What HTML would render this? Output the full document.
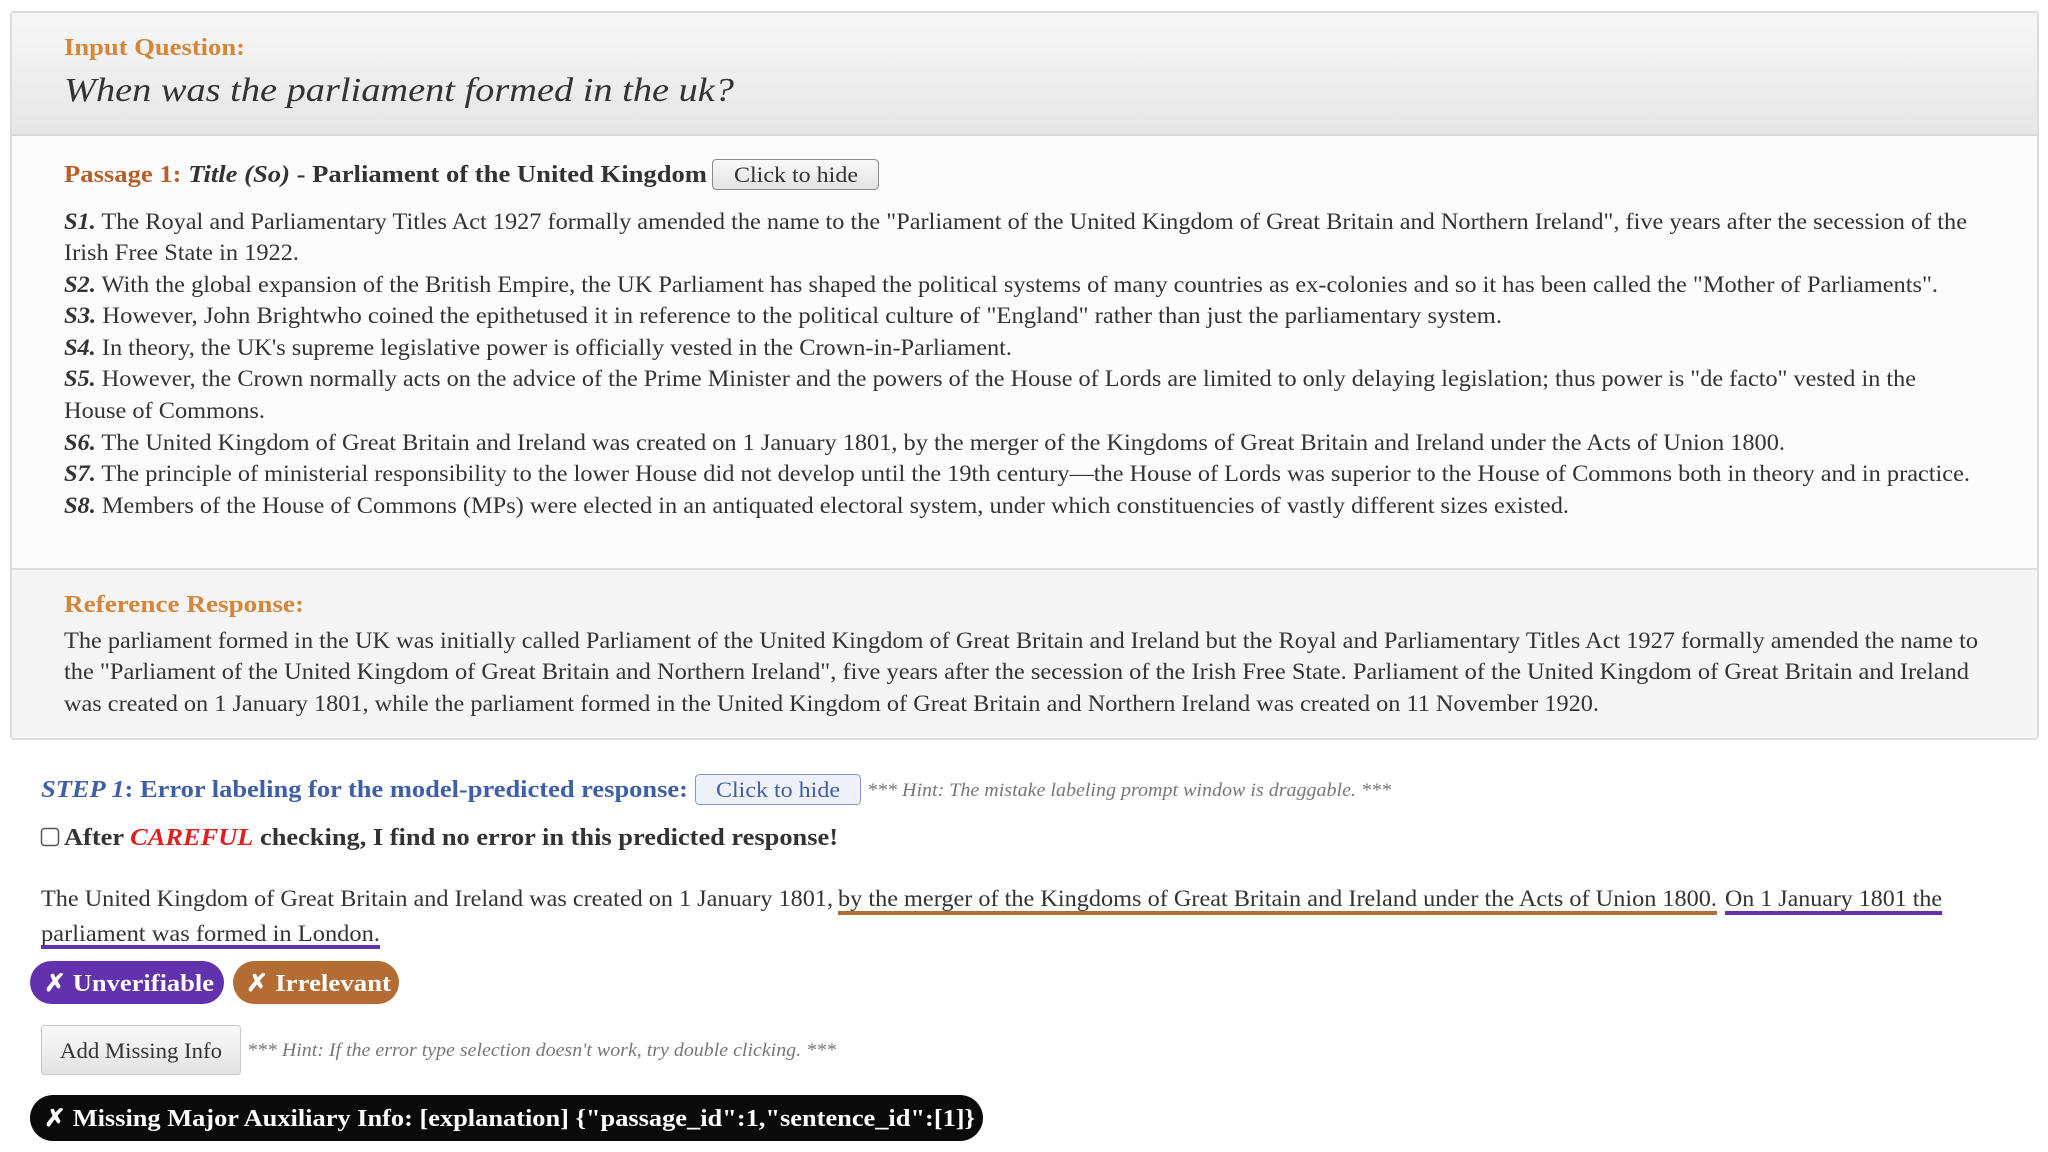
<!DOCTYPE html>
<html><head><meta charset="utf-8"><style>
html,body{margin:0;padding:0;background:#fff;width:2048px;height:1152px;overflow:hidden}
svg{display:block}
text{font-family:"Liberation Serif",serif;fill:#333}
.b{font-size:23px}
.lab{font-size:24px;font-weight:bold;fill:#d4863a}
.sb{font-weight:bold;font-style:italic}
.h{font-size:19px;font-style:italic;fill:#777}
</style></head><body>
<svg width="2048" height="1152" viewBox="0 0 2048 1152" xmlns="http://www.w3.org/2000/svg">
<defs>
<linearGradient id="g1" x1="0" y1="0" x2="0" y2="1"><stop offset="0" stop-color="#f7f7f7"/><stop offset="1" stop-color="#e6e6e6"/></linearGradient>
<linearGradient id="gb" x1="0" y1="0" x2="0" y2="1"><stop offset="0" stop-color="#fafafa"/><stop offset="1" stop-color="#e2e2e2"/></linearGradient>
</defs>
<!-- panels -->
<rect x="11" y="12" width="2027" height="727" fill="#fff" stroke="#dcdcdc" stroke-width="2" rx="3"/>
<rect x="12" y="13" width="2025" height="121" fill="url(#g1)"/>
<line x1="12" y1="135" x2="2037" y2="135" stroke="#d8d8d8" stroke-width="2"/>
<rect x="12" y="136" width="2025" height="433" fill="#fcfcfc"/>
<line x1="12" y1="569" x2="2037" y2="569" stroke="#dedede" stroke-width="2"/>
<rect x="12" y="570" width="2025" height="168" fill="#f5f5f5"/>

<text class="lab" x="64" y="55" textLength="181" lengthAdjust="spacingAndGlyphs">Input Question:</text>
<text x="64" y="101" style="font-size:34px;font-style:italic;fill:#333" textLength="670" lengthAdjust="spacingAndGlyphs">When was the parliament formed in the uk?</text>

<text x="64" y="182" style="font-size:24px;font-weight:bold" textLength="643" lengthAdjust="spacingAndGlyphs"><tspan fill="#b5602a">Passage 1: </tspan><tspan font-style="italic">Title (So)</tspan> - Parliament of the United Kingdom</text>
<rect x="712.5" y="159.5" width="166" height="30" rx="4" fill="url(#gb)" stroke="#8a8a8a"/>
<text x="734" y="182" style="font-size:22px" textLength="124" lengthAdjust="spacingAndGlyphs">Click to hide</text>

<text class="b" x="64" y="229" textLength="1903" lengthAdjust="spacingAndGlyphs"><tspan class="sb">S1.</tspan> The Royal and Parliamentary Titles Act 1927 formally amended the name to the "Parliament of the United Kingdom of Great Britain and Northern Ireland", five years after the secession of the</text>
<text class="b" x="64" y="260" textLength="235" lengthAdjust="spacingAndGlyphs">Irish Free State in 1922.</text>
<text class="b" x="64" y="292" textLength="1874" lengthAdjust="spacingAndGlyphs"><tspan class="sb">S2.</tspan> With the global expansion of the British Empire, the UK Parliament has shaped the political systems of many countries as ex-colonies and so it has been called the "Mother of Parliaments".</text>
<text class="b" x="64" y="323" textLength="1438" lengthAdjust="spacingAndGlyphs"><tspan class="sb">S3.</tspan> However, John Brightwho coined the epithetused it in reference to the political culture of "England" rather than just the parliamentary system.</text>
<text class="b" x="64" y="355" textLength="948" lengthAdjust="spacingAndGlyphs"><tspan class="sb">S4.</tspan> In theory, the UK's supreme legislative power is officially vested in the Crown-in-Parliament.</text>
<text class="b" x="64" y="386" textLength="1852" lengthAdjust="spacingAndGlyphs"><tspan class="sb">S5.</tspan> However, the Crown normally acts on the advice of the Prime Minister and the powers of the House of Lords are limited to only delaying legislation; thus power is "de facto" vested in the</text>
<text class="b" x="64" y="418" textLength="201" lengthAdjust="spacingAndGlyphs">House of Commons.</text>
<text class="b" x="64" y="450" textLength="1721" lengthAdjust="spacingAndGlyphs"><tspan class="sb">S6.</tspan> The United Kingdom of Great Britain and Ireland was created on 1 January 1801, by the merger of the Kingdoms of Great Britain and Ireland under the Acts of Union 1800.</text>
<text class="b" x="64" y="481" textLength="1906" lengthAdjust="spacingAndGlyphs"><tspan class="sb">S7.</tspan> The principle of ministerial responsibility to the lower House did not develop until the 19th century—the House of Lords was superior to the House of Commons both in theory and in practice.</text>
<text class="b" x="64" y="513" textLength="1505" lengthAdjust="spacingAndGlyphs"><tspan class="sb">S8.</tspan> Members of the House of Commons (MPs) were elected in an antiquated electoral system, under which constituencies of vastly different sizes existed.</text>

<text class="lab" x="64" y="612" textLength="240" lengthAdjust="spacingAndGlyphs">Reference Response:</text>
<text class="b" x="64" y="648" textLength="1914" lengthAdjust="spacingAndGlyphs">The parliament formed in the UK was initially called Parliament of the United Kingdom of Great Britain and Ireland but the Royal and Parliamentary Titles Act 1927 formally amended the name to</text>
<text class="b" x="64" y="679" textLength="1905" lengthAdjust="spacingAndGlyphs">the "Parliament of the United Kingdom of Great Britain and Northern Ireland", five years after the secession of the Irish Free State. Parliament of the United Kingdom of Great Britain and Ireland</text>
<text class="b" x="64" y="711" textLength="1535" lengthAdjust="spacingAndGlyphs">was created on 1 January 1801, while the parliament formed in the United Kingdom of Great Britain and Northern Ireland was created on 11 November 1920.</text>

<!-- step 1 -->
<text x="41" y="797" style="font-size:24px;font-weight:bold;fill:#3f5fa8" textLength="647" lengthAdjust="spacingAndGlyphs"><tspan font-style="italic">STEP 1</tspan>: Error labeling for the model-predicted response:</text>
<rect x="695.5" y="774.5" width="165" height="30" rx="4" fill="#eef1f8" stroke="#8497c4"/>
<text x="716" y="797" style="font-size:22px;fill:#3f5fa8" textLength="124" lengthAdjust="spacingAndGlyphs">Click to hide</text>
<text class="h" x="867" y="796" textLength="524" lengthAdjust="spacingAndGlyphs">*** Hint: The mistake labeling prompt window is draggable. ***</text>

<rect x="41.5" y="828.5" width="17" height="17" rx="3" fill="#fff" stroke="#555" stroke-width="1.5"/>
<text x="64" y="845" style="font-size:24px;font-weight:bold" textLength="774" lengthAdjust="spacingAndGlyphs">After <tspan fill="#e0201c" font-style="italic">CAREFUL</tspan> checking, I find no error in this predicted response!</text>

<text class="b" x="41" y="906" textLength="792" lengthAdjust="spacingAndGlyphs">The United Kingdom of Great Britain and Ireland was created on 1 January 1801,</text>
<text class="b" x="838" y="906" textLength="879" lengthAdjust="spacingAndGlyphs">by the merger of the Kingdoms of Great Britain and Ireland under the Acts of Union 1800.</text>
<text class="b" x="1725" y="906" textLength="217" lengthAdjust="spacingAndGlyphs">On 1 January 1801 the</text>
<rect x="838" y="911" width="879" height="4" fill="#b46c35"/>
<rect x="1725" y="911" width="217" height="4" fill="#6231ad"/>
<text class="b" x="41" y="941" textLength="339" lengthAdjust="spacingAndGlyphs">parliament was formed in London.</text>
<rect x="41" y="945" width="339" height="4" fill="#6231ad"/>

<rect x="30" y="961" width="194" height="43" rx="21.5" fill="#6231ad"/>
<text x="44" y="991" style="font-size:24px;font-weight:bold;fill:#fff" textLength="170" lengthAdjust="spacingAndGlyphs">✗ Unverifiable</text>
<rect x="233" y="961" width="166" height="43" rx="21.5" fill="#b46c35"/>
<text x="246" y="991" style="font-size:24px;font-weight:bold;fill:#fff" textLength="145" lengthAdjust="spacingAndGlyphs">✗ Irrelevant</text>

<rect x="41.5" y="1025.5" width="199" height="49" rx="3" fill="url(#gb)" stroke="#c8c8c8"/>
<text x="60" y="1058" style="font-size:22px" textLength="162" lengthAdjust="spacingAndGlyphs">Add Missing Info</text>
<text class="h" x="247" y="1056" textLength="589" lengthAdjust="spacingAndGlyphs">*** Hint: If the error type selection doesn't work, try double clicking. ***</text>

<rect x="30" y="1095" width="953" height="46" rx="23" fill="#0a0a0a"/>
<text x="44" y="1126" style="font-size:24px;font-weight:bold;fill:#fff" textLength="931" lengthAdjust="spacingAndGlyphs">✗ Missing Major Auxiliary Info: [explanation] {"passage_id":1,"sentence_id":[1]}</text>
</svg>
</body></html>
